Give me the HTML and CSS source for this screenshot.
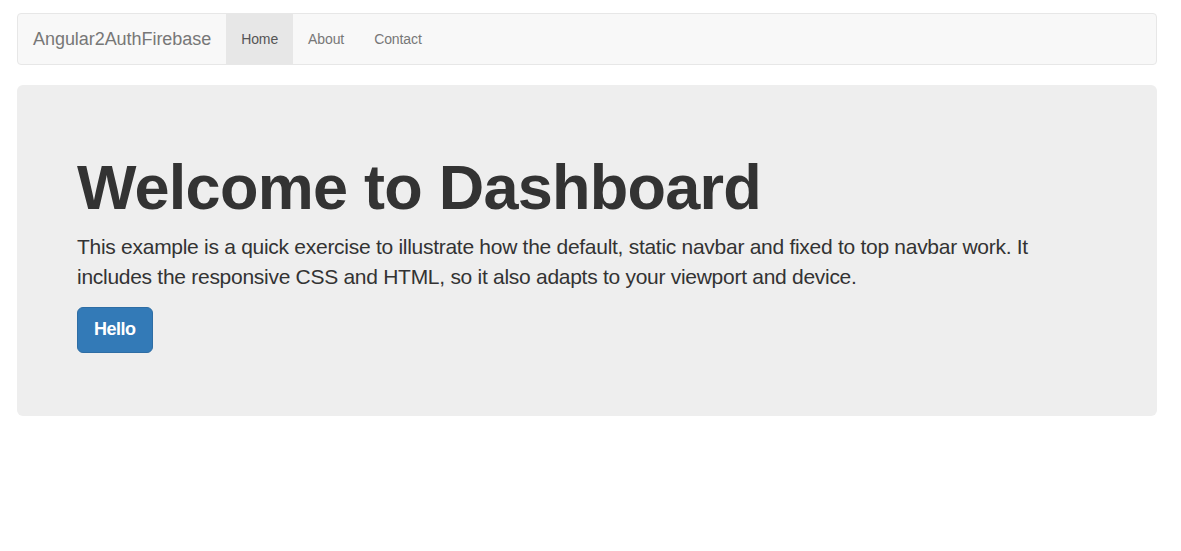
FILE: index.html
```html
<!DOCTYPE html>
<html lang="en">
<head>
    <meta charset="UTF-8">
    <meta name="viewport" content="width=device-width, initial-scale=1.0">
    <title>Angular2AuthFirebase</title>
    <link rel="stylesheet" href="styles.css">
</head>
<body>
    <div class="container">
        <nav class="navbar">
            <a class="navbar-brand" href="#">Angular2AuthFirebase</a>
            <ul class="nav">
                <li class="active"><a href="#">Home</a></li>
                <li><a href="#">About</a></li>
                <li><a href="#">Contact</a></li>
            </ul>
        </nav>

        <div class="jumbotron">
            <h1>Welcome to Dashboard</h1>
            <p>This example is a quick exercise to illustrate how the default, static navbar and fixed to top navbar work. It includes the responsive CSS and HTML, so it also adapts to your viewport and device.</p>
            <p><a class="btn btn-primary" href="#">Hello</a></p>
        </div>
    </div>
</body>
</html>
```

FILE: styles.css
```css
* {
    box-sizing: border-box;
}

body {
    font-family: "Liberation Sans", Arial, sans-serif;
    font-size: 14px;
    line-height: 1.42857;
    margin: 0;
    padding: 13px 0 0 17px;
    background-color: #fff;
    color: #333;
}

a {
    text-decoration: none;
}

.container {
    width: 1140px;
}

.navbar {
    display: flex;
    min-height: 52px;
    margin-bottom: 20px;
    background-color: #f8f8f8;
    border: 1px solid #e7e7e7;
    border-radius: 4px;
}

.navbar-brand {
    height: 50px;
    padding: 15px;
    font-size: 18px;
    line-height: 20px;
    color: #777;
    letter-spacing: -0.05px;
}

.nav {
    display: flex;
    margin: 0;
    padding: 0;
    list-style: none;
}

.nav li a {
    display: block;
    padding: 15px;
    line-height: 20px;
    color: #777;
    letter-spacing: -0.1px;
}

.nav li.active a {
    background-color: #e7e7e7;
    color: #555;
}

.jumbotron {
    padding: 48px 60px;
    background-color: #eee;
    border-radius: 6px;
}

.jumbotron h1 {
    margin: 20px 0 10px;
    font-size: 63px;
    font-weight: bold;
    line-height: 1.1;
    color: #333;
    letter-spacing: -0.75px;
}

.jumbotron p {
    margin: 0 0 15px;
    font-size: 21px;
    font-weight: 200;
    letter-spacing: -0.28px;
}

.btn {
    display: inline-block;
    padding: 10px 16px;
    font-size: 18px;
    font-weight: bold;
    line-height: 1.33333;
    letter-spacing: -0.5px;
    border: 1px solid transparent;
    border-radius: 6px;
    vertical-align: middle;
}

.btn-primary {
    color: #fff;
    background-color: #337ab7;
    border-color: #2e6da4;
}
```
